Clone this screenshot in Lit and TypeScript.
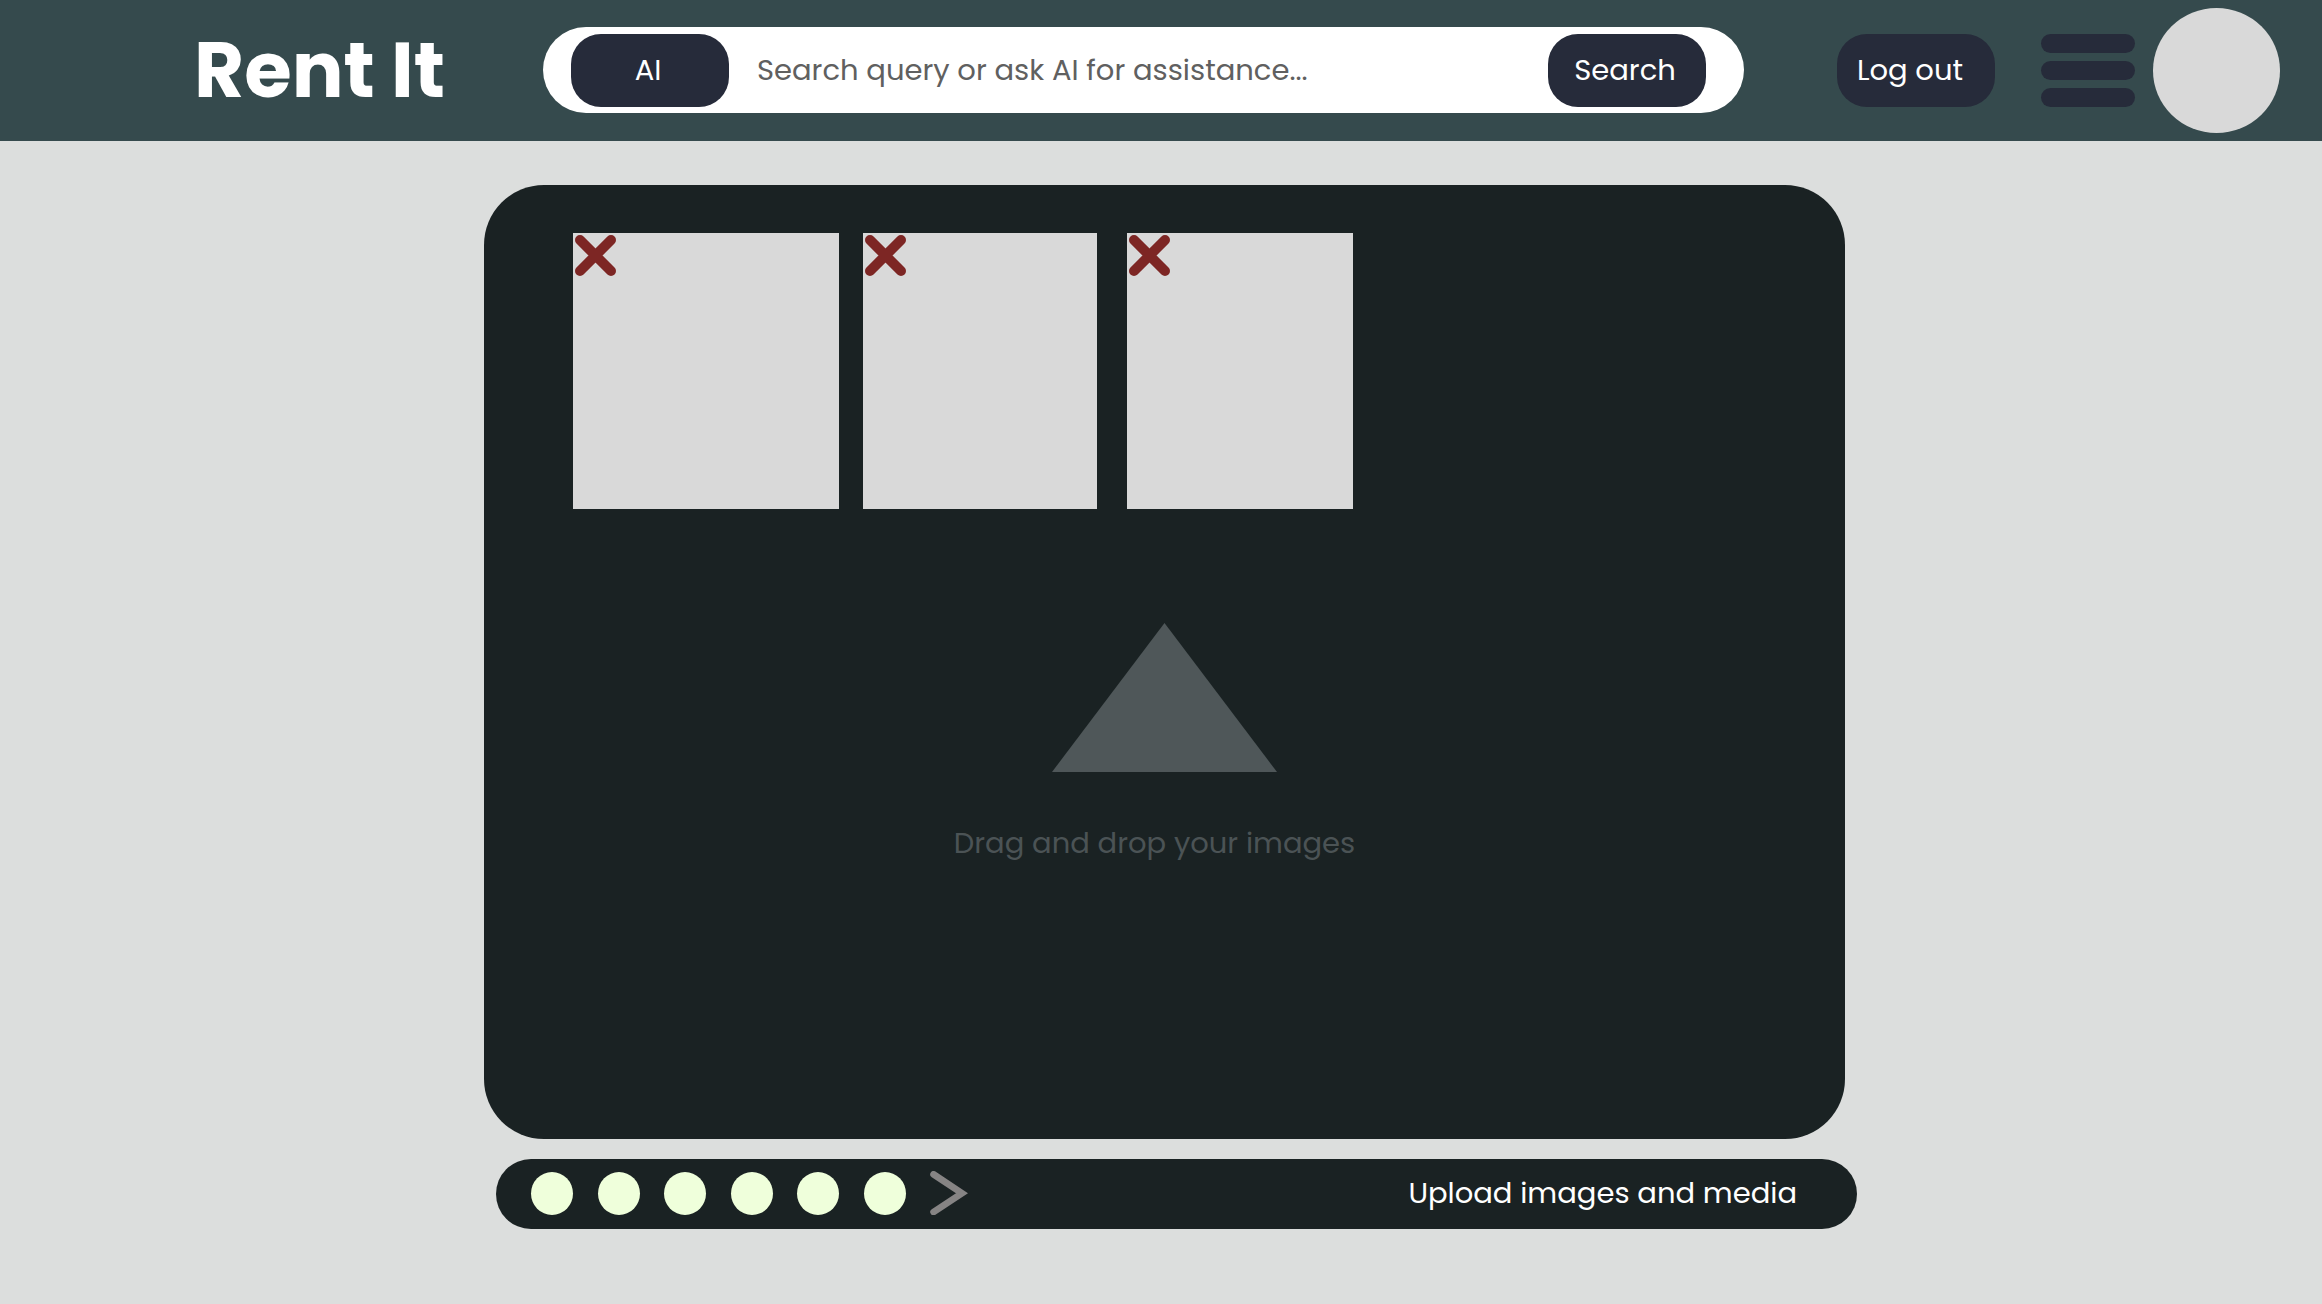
import { LitElement, html, css } from "lit";
import { customElement, state } from "lit/decorators.js";

interface Photo {
  id: number;
  size: "wide" | "medium" | "narrow";
}

@customElement("site-header")
export class SiteHeader extends LitElement {
  static styles = css`
    :host {
      display: block;
      background: #354a4d;
      color: #ffffff;
    }
    .bar {
      display: flex;
      align-items: center;
      height: 141px;
      padding: 0 42px 1px 194px;
      box-sizing: border-box;
    }
    .brand {
      width: 349px;
      flex: none;
      color: #ffffff;
      font-size: 77px;
      font-weight: 700;
      line-height: 80px;
      text-decoration: none;
      white-space: nowrap;
    }
    .search {
      display: flex;
      align-items: center;
      flex: 1;
      min-width: 0;
      height: 86px;
      padding: 0 38px 0 28px;
      box-sizing: border-box;
      border-radius: 43px;
      background: #ffffff;
    }
    .field {
      flex: 1;
      min-width: 0;
      height: 60px;
      margin: 0 28px;
      padding: 0;
      border: 0;
      outline: 0;
      background: transparent;
      color: #606060;
      font: inherit;
    }
    .field::placeholder {
      color: #606060;
      opacity: 1;
    }
    .pill {
      flex: none;
      width: 158px;
      height: 73px;
      padding: 0 4px 0 0;
      border: 0;
      border-radius: 30px;
      background: #262b3a;
      color: #ffffff;
      font: inherit;
      white-space: nowrap;
      cursor: pointer;
    }
    .logout {
      margin-left: 93px;
      padding-right: 12px;
    }
    .menu {
      display: flex;
      flex: none;
      flex-direction: column;
      justify-content: space-between;
      width: 94px;
      height: 73px;
      margin: 0 18px 0 46px;
      padding: 0;
      border: 0;
      background: transparent;
      cursor: pointer;
    }
    .line {
      width: 100%;
      height: 19px;
      border-radius: 10px;
      background: #262b3a;
    }
    .avatar {
      flex: none;
      width: 127px;
      height: 125px;
      padding: 0;
      border: 0;
      border-radius: 50%;
      background: #d9d9d9;
      cursor: pointer;
    }
  `;

  render() {
    return html`
      <header class="bar">
        <a class="brand" href="#">Rent It</a>
        <form class="search" role="search" @submit=${(e: Event) => e.preventDefault()}>
          <button class="pill" type="button">AI</button>
          <input
            class="field"
            type="text"
            name="query"
            aria-label="Search query"
            placeholder="Search query or ask AI for assistance..."
          />
          <button class="pill" type="submit">Search</button>
        </form>
        <button class="pill logout" type="button">Log out</button>
        <button class="menu" type="button" aria-label="Menu">
          <span class="line"></span>
          <span class="line"></span>
          <span class="line"></span>
        </button>
        <button class="avatar" type="button" aria-label="Profile"></button>
      </header>
    `;
  }
}

@customElement("photo-drop")
export class PhotoDrop extends LitElement {
  static styles = css`
    :host {
      display: flex;
      flex-direction: column;
      padding: 48px 89px 0;
      box-sizing: border-box;
      border-radius: 60px;
      background: #1a2223;
    }
    .photos {
      display: flex;
      gap: 24px;
      min-height: 276px;
      margin: 0;
      padding: 0;
      list-style: none;
    }
    .photo {
      height: 276px;
      background: #d9d9d9;
    }
    .wide {
      width: 266px;
    }
    .medium {
      width: 234px;
    }
    .narrow {
      width: 226px;
      margin-left: 6px;
    }
    .remove {
      display: block;
      width: 45px;
      height: 45px;
      padding: 2px;
      border: 0;
      background: transparent;
      cursor: pointer;
    }
    .cross {
      display: block;
      width: 41px;
      height: 41px;
    }
    .drop {
      display: flex;
      flex: 1;
      flex-direction: column;
      align-items: center;
      gap: 49px;
      padding-top: 114px;
      color: #4b5355;
      cursor: pointer;
    }
    .arrow {
      display: block;
      width: 225px;
      height: 149px;
    }
    .hint {
      padding-right: 20px;
      line-height: 44px;
    }
    .file {
      width: 1px;
      height: 1px;
      margin: 0;
      opacity: 0;
    }
  `;

  @state() private photos: Photo[] = [
    { id: 1, size: "wide" },
    { id: 2, size: "medium" },
    { id: 3, size: "narrow" },
  ];

  private remove(id: number) {
    this.photos = this.photos.filter((p) => p.id !== id);
  }

  render() {
    return html`
      <ul class="photos">
        ${this.photos.map(
          (p) => html`
            <li class="photo ${p.size}">
              <button
                class="remove"
                type="button"
                aria-label="Remove image ${p.id}"
                @click=${() => this.remove(p.id)}
              >
                <svg class="cross" viewBox="0 0 41 41" aria-hidden="true">
                  <path
                    d="M5 5 36 36M36 5 5 36"
                    fill="none"
                    stroke="#7d2624"
                    stroke-width="10"
                    stroke-linecap="round"
                  />
                </svg>
              </button>
            </li>
          `
        )}
      </ul>
      <label class="drop" for="files">
        <svg class="arrow" viewBox="0 0 225 149" aria-hidden="true">
          <path d="M112.5 0 225 149H0Z" fill="#4f5759" />
        </svg>
        <span class="hint">Drag and drop your images</span>
        <input class="file" id="files" type="file" accept="image/*" multiple />
      </label>
    `;
  }
}

@customElement("step-bar")
export class StepBar extends LitElement {
  static styles = css`
    :host {
      display: flex;
      align-items: center;
      height: 70px;
      padding: 0 60px 2px 35px;
      box-sizing: border-box;
      border-radius: 35px;
      background: #1a2223;
      color: #ffffff;
    }
    .steps {
      display: flex;
      flex: none;
      justify-content: space-between;
      width: 375px;
    }
    .step {
      width: 42px;
      height: 43px;
      padding: 0;
      border: 0;
      border-radius: 50%;
      background: #efffdb;
      cursor: pointer;
    }
    .next {
      margin-left: 24px;
      padding: 0;
      border: 0;
      background: transparent;
      cursor: pointer;
    }
    .chevron {
      display: block;
      width: 38px;
      height: 44px;
    }
    .title {
      margin: 0 0 0 auto;
      font-size: inherit;
      font-weight: 400;
      white-space: nowrap;
    }
  `;

  render() {
    return html`
      <nav class="steps" aria-label="Steps">
        ${[1, 2, 3, 4, 5, 6].map(
          (n) => html`<button class="step" type="button" aria-label="Step ${n}"></button>`
        )}
      </nav>
      <button class="next" type="button" aria-label="Next">
        <svg class="chevron" viewBox="0 0 38 44" aria-hidden="true">
          <path
            d="M3.6 3.4 32 22.2 3.6 41"
            fill="none"
            stroke="#868484"
            stroke-width="6.7"
            stroke-linecap="round"
            stroke-linejoin="miter"
          />
        </svg>
      </button>
      <h1 class="title">Upload images and media</h1>
    `;
  }
}

@customElement("app-root")
export class AppRoot extends LitElement {
  static styles = css`
    :host {
      display: flex;
      flex-direction: column;
      min-height: 100vh;
      background: #dcdedd;
      font-family: Poppins, Inter, "Open Sans", sans-serif;
      font-size: 29px;
      line-height: 44px;
    }
    .main {
      display: grid;
      flex: 1;
      grid-template-columns: 484fr 1361fr 477fr;
      grid-template-rows: 1fr auto;
      row-gap: 20px;
      padding: 44px 0 75px;
    }
    .panel,
    .footer {
      grid-column: 2;
    }
    .footer {
      margin: 0 -12px 0 12px;
    }
  `;

  render() {
    return html`
      <site-header></site-header>
      <main class="main">
        <photo-drop class="panel"></photo-drop>
        <step-bar class="footer"></step-bar>
      </main>
    `;
  }
}
